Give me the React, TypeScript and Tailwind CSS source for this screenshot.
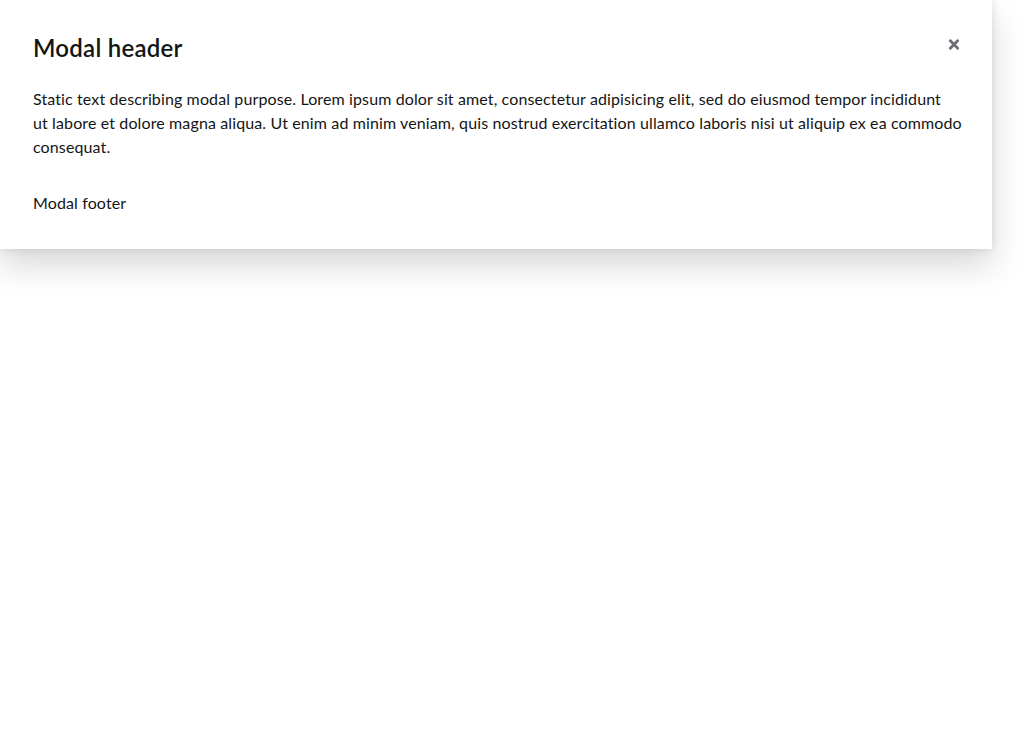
import React from "react";

export default function App() {
  return (
    <div className="w-[1024px] h-[730px] bg-white overflow-hidden">
      <div className="relative w-[992px] bg-white text-[#151515] shadow-[0_16px_32px_0_rgba(3,3,3,0.16),0_0_8px_0_rgba(3,3,3,0.1)] font-['Lato',sans-serif]">
        <button className="absolute top-[37px] right-[31px] w-[14px] h-[14px] flex items-center justify-center text-[#6a6e73]">
          <svg viewBox="0 0 352 512" className="w-[12px] h-[15px]" fill="currentColor">
            <path d="M242.72 256l100.07-100.07c12.28-12.28 12.28-32.19 0-44.48l-22.240-22.24c-12.28-12.28-32.19-12.28-44.48 0L176 189.28 75.93 89.21c-12.28-12.28-32.19-12.28-44.48 0L9.21 111.45c-12.28 12.28-12.28 32.19 0 44.48L109.28 256 9.21 356.07c-12.28 12.28-12.28 32.19 0 44.48l22.24 22.24c12.28 12.28 32.2 12.28 44.48 0L176 322.72l100.07 100.07c12.28 12.28 32.2 12.28 44.48 0l22.24-22.24c12.28-12.28 12.28-32.19 0-44.48L242.72 256z" />
          </svg>
        </button>
        <div className="pt-[32px] pl-[33px] pr-[80px]">
          <h1 className="text-[24px] leading-[31px] font-semibold tracking-[0.25px]">Modal header</h1>
        </div>
        <div className="pt-[24px] pl-[33px] pr-[20px] text-[16px] leading-[24px] tracking-[0.12px]">
          Static text describing modal purpose. Lorem ipsum dolor sit amet, consectetur adipisicing elit, sed do eiusmod tempor incididunt
          <br />
          ut labore et dolore magna aliqua. Ut enim ad minim veniam, quis nostrud exercitation ullamco laboris nisi ut aliquip ex ea commodo consequat.
        </div>
        <div className="pt-[32px] pb-[34px] pl-[33px] text-[16px] leading-[24px] tracking-[0.12px]">Modal footer</div>
      </div>
    </div>
  );
}
